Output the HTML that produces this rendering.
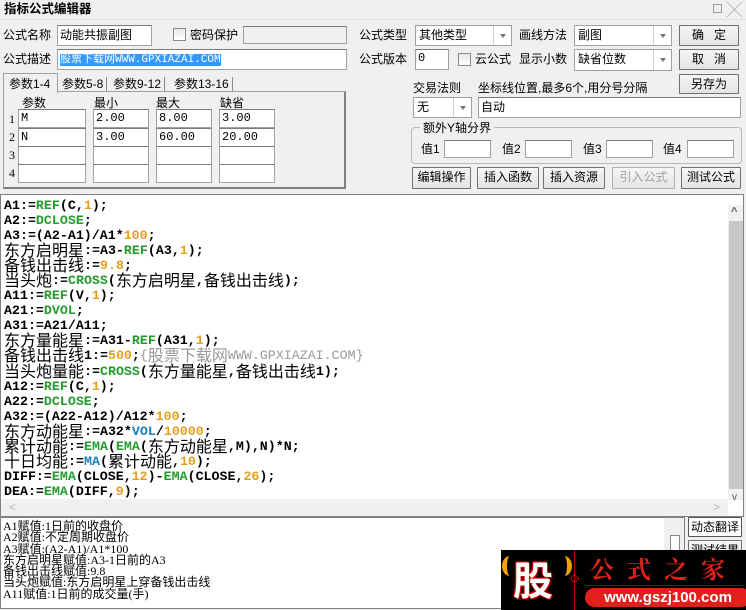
<!DOCTYPE html>
<html><head><meta charset="utf-8">
<style>
*{box-sizing:border-box;margin:0;padding:0}
body{width:746px;height:610px;overflow:hidden;background:#f0f0f0;font-family:"Liberation Sans","Noto Sans CJK SC",sans-serif;font-size:12px;color:#000;position:relative}
.a{position:absolute;white-space:nowrap}
.in{position:absolute;background:#fff;border:1px solid #a0a0a0;border-top-color:#7a7a7a;font-size:12px;line-height:17px;padding-left:2px;font-family:"Liberation Mono","Noto Sans CJK SC",monospace}
.lb{position:absolute;font-size:12px;line-height:14px;white-space:nowrap}
.btn{position:absolute;background:linear-gradient(#f6f6f6,#e4e4e4);border:1px solid #707070;text-align:center;font-size:12px;line-height:19px;border-radius:1px}
.sel{position:absolute;background:#fff;border:1px solid #a0a0a0;font-size:12px;line-height:19px;padding-left:3px}
.sel:after{content:"";position:absolute;right:0;top:0;width:17px;height:100%;border-left:1px solid #d0d0d0;background:#fff}
.sel i{position:absolute;right:5px;top:8px;width:0;height:0;border:3px solid transparent;border-top:4px solid #777;z-index:2}
.cb{position:absolute;width:13px;height:13px;border:1px solid #8a8a8a;background:linear-gradient(#e8e8e8,#fff)}
.code{position:absolute;left:0;top:194px;width:744px;height:323px;background:#fff;border:1px solid #828282;overflow:hidden}
.code .p{position:absolute;left:3px;top:3px;font-family:"Liberation Mono",monospace;font-weight:bold;font-size:13.3px}
.code .p div{height:15.05px;line-height:15px;white-space:pre;overflow:visible}
.code .p s{text-decoration:none;font-family:"Noto Sans CJK SC",sans-serif;font-weight:normal;font-size:16px;line-height:15px;display:inline-block;height:15px;vertical-align:top;margin-top:-1px}
.g{color:#239b2c}.o{color:#e3a01e}.b{color:#1e7fc0}.gr{color:#999;font-weight:normal}
.bot{position:absolute;left:0;top:517px;width:685px;height:92px;background:#fff;border:1px solid #828282;font-family:"Liberation Serif","Noto Sans CJK SC",serif;font-size:12px;line-height:11.3px;padding:3px 0 0 2px;overflow:hidden}
</style></head><body>
<div class="a" style="left:0;top:0;width:746px;height:19px;background:#f0f0f0"></div>
<div class="lb" style="left:4px;top:2px;font-weight:bold;font-size:12.5px">指标公式编辑器</div>
<div class="a" style="left:713px;top:4px;width:9px;height:9px;border:1px solid #999"></div>
<div class="a" style="left:727px;top:-1px;color:#999;font-size:15px">╳</div>
<div class="a" style="left:0;top:19px;width:746px;height:1px;background:#e0e0e0"></div>

<div class="lb" style="left:3px;top:28px">公式名称</div>
<div class="in" style="left:57px;top:25px;width:95px;height:21px;font-family:'Noto Sans CJK SC';">动能共振副图</div>
<div class="cb" style="left:173px;top:28px"></div>
<div class="lb" style="left:190px;top:28px">密码保护</div>
<div class="in" style="left:243px;top:26px;width:104px;height:18px;background:#f0f0f0"></div>
<div class="lb" style="left:3px;top:52px">公式描述</div>
<div class="in" style="left:57px;top:49px;width:290px;height:21px"><span style="background:#3399ff;color:#fff;font-size:11px"><span style="font-family:'Noto Sans CJK SC'">股票下载网</span>WWW.GPXIAZAI.COM</span></div>

<div class="a" style="left:3px;top:91px;width:343px;height:98px;border:1px solid #a0a0a0;border-right:2px solid #808080;border-bottom:2px solid #808080;background:#f0f0f0"></div>
<div class="a" style="left:3px;top:73px;width:55px;height:20px;background:#f0f0f0;border:1px solid #a0a0a0;border-bottom:none"></div>
<div class="lb" style="left:9px;top:77px">参数1-4</div>
<div class="lb" style="left:59px;top:77px;border-right:1px solid #888;padding:0 3px 0 3px">参数5-8</div>
<div class="lb" style="left:113px;top:77px;border-right:1px solid #888;padding-right:3px">参数9-12</div>
<div class="lb" style="left:174px;top:77px;border-right:1px solid #888;padding-right:3px">参数13-16</div>
<div class="lb" style="left:22px;top:96px">参数</div>
<div class="lb" style="left:94px;top:96px">最小</div>
<div class="lb" style="left:156px;top:96px">最大</div>
<div class="lb" style="left:220px;top:96px">缺省</div>
<div class="lb" style="left:9px;top:112px;font-family:'Liberation Serif'">1</div>
<div class="lb" style="left:9px;top:130px;font-family:'Liberation Serif'">2</div>
<div class="lb" style="left:9px;top:148px;font-family:'Liberation Serif'">3</div>
<div class="lb" style="left:9px;top:166px;font-family:'Liberation Serif'">4</div>
<div class="in" style="left:18px;top:109px;width:68px;height:19px">M</div>
<div class="in" style="left:93px;top:109px;width:56px;height:19px">2.00</div>
<div class="in" style="left:156px;top:109px;width:56px;height:19px">8.00</div>
<div class="in" style="left:219px;top:109px;width:56px;height:19px">3.00</div>
<div class="in" style="left:18px;top:128px;width:68px;height:19px">N</div>
<div class="in" style="left:93px;top:128px;width:56px;height:19px">3.00</div>
<div class="in" style="left:156px;top:128px;width:56px;height:19px">60.00</div>
<div class="in" style="left:219px;top:128px;width:56px;height:19px">20.00</div>
<div class="in" style="left:18px;top:146px;width:68px;height:19px"></div>
<div class="in" style="left:93px;top:146px;width:56px;height:19px"></div>
<div class="in" style="left:156px;top:146px;width:56px;height:19px"></div>
<div class="in" style="left:219px;top:146px;width:56px;height:19px"></div>
<div class="in" style="left:18px;top:164px;width:68px;height:19px"></div>
<div class="in" style="left:93px;top:164px;width:56px;height:19px"></div>
<div class="in" style="left:156px;top:164px;width:56px;height:19px"></div>
<div class="in" style="left:219px;top:164px;width:56px;height:19px"></div>

<div class="lb" style="left:359px;top:28px">公式类型</div>
<div class="sel" style="left:415px;top:25px;width:97px;height:21px">其他类型<i></i></div>
<div class="lb" style="left:519px;top:28px">画线方法</div>
<div class="sel" style="left:574px;top:25px;width:98px;height:21px">副图<i></i></div>
<div class="btn" style="left:679px;top:25px;width:60px;height:21px">确&nbsp;&nbsp;&nbsp;定</div>
<div class="lb" style="left:359px;top:52px">公式版本</div>
<div class="in" style="left:415px;top:49px;width:34px;height:21px">0</div>
<div class="cb" style="left:458px;top:53px"></div>
<div class="lb" style="left:475px;top:52px">云公式</div>
<div class="lb" style="left:519px;top:52px">显示小数</div>
<div class="sel" style="left:574px;top:49px;width:98px;height:22px">缺省位数<i></i></div>
<div class="btn" style="left:679px;top:49px;width:60px;height:21px">取&nbsp;&nbsp;&nbsp;消</div>
<div class="btn" style="left:679px;top:74px;width:60px;height:20px">另存为</div>
<div class="lb" style="left:413px;top:81px">交易法则</div>
<div class="lb" style="left:478px;top:81px">坐标线位置,最多6个,用分号分隔</div>
<div class="sel" style="left:413px;top:97px;width:59px;height:21px">无<i></i></div>
<div class="in" style="left:478px;top:97px;width:263px;height:21px;font-family:'Noto Sans CJK SC'">自动</div>
<div class="a" style="left:411px;top:127px;width:331px;height:37px;border:1px solid #b8b8b8;border-radius:4px"></div>
<div class="lb" style="left:420px;top:121px;background:#f0f0f0;padding:0 3px">额外Y轴分界</div>
<div class="lb" style="left:421px;top:142px">值1</div>
<div class="in" style="left:444px;top:140px;width:47px;height:18px"></div>
<div class="lb" style="left:502px;top:142px">值2</div>
<div class="in" style="left:525px;top:140px;width:47px;height:18px"></div>
<div class="lb" style="left:583px;top:142px">值3</div>
<div class="in" style="left:606px;top:140px;width:47px;height:18px"></div>
<div class="lb" style="left:663px;top:142px">值4</div>
<div class="in" style="left:687px;top:140px;width:47px;height:18px"></div>
<div class="btn" style="left:412px;top:167px;width:59px;height:22px">编辑操作</div>
<div class="btn" style="left:477px;top:167px;width:62px;height:22px">插入函数</div>
<div class="btn" style="left:543px;top:167px;width:62px;height:22px">插入资源</div>
<div class="btn" style="left:612px;top:167px;width:63px;height:22px;color:#a0a0a0;border-color:#b0b0b0">引入公式</div>
<div class="btn" style="left:681px;top:167px;width:60px;height:22px">测试公式</div>

<div class="code">
<div class="p">
<div>A1:=<span class="g">REF</span>(C,<span class="o">1</span>);</div>
<div>A2:=<span class="g">DCLOSE</span>;</div>
<div>A3:=(A2-A1)/A1*<span class="o">100</span>;</div>
<div><s>东方启明星</s>:=A3-<span class="g">REF</span>(A3,<span class="o">1</span>);</div>
<div><s>备钱出击线</s>:=<span class="o">9.8</span>;</div>
<div><s>当头炮</s>:=<span class="g">CROSS</span>(<s>东方启明星</s>,<s>备钱出击线</s>);</div>
<div>A11:=<span class="g">REF</span>(V,<span class="o">1</span>);</div>
<div>A21:=<span class="g">DVOL</span>;</div>
<div>A31:=A21/A11;</div>
<div><s>东方量能星</s>:=A31-<span class="g">REF</span>(A31,<span class="o">1</span>);</div>
<div><s>备钱出击线</s>1:=<span class="o">500</span>;<span class="gr">{<s>股票下载网</s>WWW.GPXIAZAI.COM}</span></div>
<div><s>当头炮量能</s>:=<span class="g">CROSS</span>(<s>东方量能星</s>,<s>备钱出击线</s>1);</div>
<div>A12:=<span class="g">REF</span>(C,<span class="o">1</span>);</div>
<div>A22:=<span class="g">DCLOSE</span>;</div>
<div>A32:=(A22-A12)/A12*<span class="o">100</span>;</div>
<div><s>东方动能星</s>:=A32*<span class="b">VOL</span>/<span class="o">10000</span>;</div>
<div><s>累计动能</s>:=<span class="g">EMA</span>(<span class="g">EMA</span>(<s>东方动能星</s>,M),N)*N;</div>
<div><s>十日均能</s>:=<span class="b">MA</span>(<s>累计动能</s>,<span class="o">10</span>);</div>
<div>DIFF:=<span class="g">EMA</span>(CLOSE,<span class="o">12</span>)-<span class="g">EMA</span>(CLOSE,<span class="o">26</span>);</div>
<div>DEA:=<span class="g">EMA</span>(DIFF,<span class="o">9</span>);</div>
</div>
<div class="a" style="left:727px;top:10px;width:16px;height:295px;background:#f0f0f0"></div>
<div class="a" style="left:728px;top:26px;width:14px;height:268px;background:#c8c8c8"></div>
<div class="a" style="left:730px;top:11px;color:#555;font-size:11px;font-weight:bold">^</div>
<div class="a" style="left:731px;top:297px;color:#555;font-size:10px">v</div>
<div class="a" style="left:0;top:304px;width:727px;height:17px;background:#f0f0f0"></div>
<div class="a" style="left:8px;top:305px;color:#bbb;font-size:12px">&lt;</div>
<div class="a" style="left:712px;top:305px;color:#bbb;font-size:12px">&gt;</div>
</div>

<div class="bot">A1赋值:1日前的收盘价<br>A2赋值:不定周期收盘价<br>A3赋值:(A2-A1)/A1*100<br>东方启明星赋值:A3-1日前的A3<br>备钱出击线赋值:9.8<br>当头炮赋值:东方启明星上穿备钱出击线<br>A11赋值:1日前的成交量(手)
<div class="a" style="left:663px;top:0;width:20px;height:92px;background:#f0f0f0"></div>
<div class="a" style="left:669px;top:17px;width:10px;height:16px;border:1px solid #888;background:#fff"></div>
</div>
<div class="btn" style="left:688px;top:517px;width:54px;height:20px;background:#fff;border-color:#555;line-height:18px">动态翻译</div>
<div class="btn" style="left:688px;top:540px;width:54px;height:20px;line-height:18px">测试结果</div>

<div class="a" style="left:501px;top:550px;width:245px;height:60px;background:#000"></div>
<div class="a" style="left:513px;top:550px;font-size:40px;line-height:56px;font-weight:bold;color:#fff;font-family:'Noto Sans CJK SC';text-shadow:0 0 3px #d00,1px 1px 0 #d00,-1px -1px 0 #d00">股</div>
<div class="a" style="left:502px;top:556px;width:16px;height:20px;border-left:5px solid #f6a000;border-radius:50%"></div>
<div class="a" style="left:556px;top:556px;width:16px;height:20px;border-right:5px solid #f6a000;border-radius:50%"></div>
<div class="a" style="left:574px;top:550px;width:1px;height:60px;background:#a00"></div>
<div class="a" style="left:571px;top:575px;width:7px;height:7px;border:1px solid #c00;transform:rotate(45deg)"></div>
<div class="a" style="left:590px;top:552px;font-size:24px;line-height:32px;color:#e0201a;letter-spacing:13px;font-weight:bold;font-family:'Noto Serif CJK SC','Noto Sans CJK SC',serif">公式之家</div>
<div class="a" style="left:586px;top:585px;height:1px;background:#800;width:158px"></div>
<div class="a" style="left:585px;top:588px;width:166px;height:19px;background:#e0201a;border-radius:10px;color:#fff;font-weight:bold;font-size:15px;line-height:19px;text-align:center">www.gszj100.com</div>
</body></html>
